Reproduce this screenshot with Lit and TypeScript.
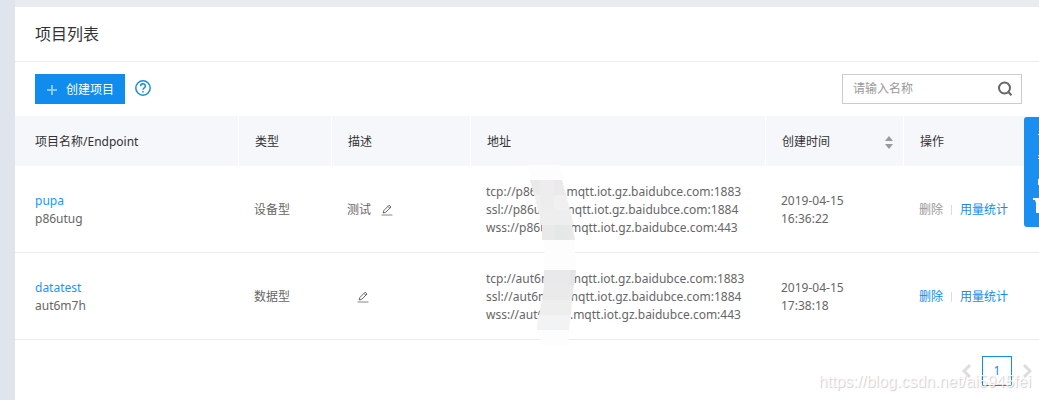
import { LitElement, html, css, svg } from "lit";
import { customElement, state } from "lit/decorators.js";

interface Project {
  name: string;
  endpoint: string;
  type: string;
  note: string;
  urls: string[];
  day: string;
  time: string;
  removable: boolean;
}

const PROJECTS: Project[] = [
  {
    name: "pupa",
    endpoint: "p86utug",
    type: "设备型",
    note: "测试",
    urls: [
      "tcp://p86utug.mqtt.iot.gz.baidubce.com:1883",
      "ssl://p86utug.mqtt.iot.gz.baidubce.com:1884",
      "wss://p86utug.mqtt.iot.gz.baidubce.com:443",
    ],
    day: "2019-04-15",
    time: "16:36:22",
    removable: false,
  },
  {
    name: "datatest",
    endpoint: "aut6m7h",
    type: "数据型",
    note: "",
    urls: [
      "tcp://aut6m7h.mqtt.iot.gz.baidubce.com:1883",
      "ssl://aut6m7h.mqtt.iot.gz.baidubce.com:1884",
      "wss://aut6m7h.mqtt.iot.gz.baidubce.com:443",
    ],
    day: "2019-04-15",
    time: "17:38:18",
    removable: true,
  },
];

// Mosaic strips that hide the endpoint inside the addresses.
const MASKS = [
  svg`<path d="M7 0H39L44 15H11Z" fill="#fdfdfd"/>
    <path d="M10 15H42L46 30H14Z" fill="#eaeaea"/><path d="M20 15H34V30H20Z" fill="#eeecef"/>
    <path d="M14 30H46L50 45H18Z" fill="#f0f0f0"/><path d="M20 30H34V60H20Z" fill="#ededee"/>
    <path d="M18 45H50L54 60H22Z" fill="#eeeeee"/>
    <path d="M22 60H52L55 75H22Z" fill="#e9e9e9"/><path d="M34 60H50V75H34Z" fill="#e6e8e8"/>
    <path d="M23 75H55V90H25Z" fill="#fdfdfd"/>`,
  svg`<path d="M24 3H56V18H24Z" fill="#fdfdfd"/>
    <path d="M24 18H56L54 33H24Z" fill="#e9e8ea"/><path d="M50 18H56L54 33H50Z" fill="#e4e6e6"/>
    <path d="M24 33H54L52 48H22Z" fill="#eaeaea"/>
    <path d="M22 48H52L51 63H19Z" fill="#eeeeee"/>
    <path d="M18 63H51L49 78H17Z" fill="#f2f3f5"/>
    <path d="M18 78H50L48 93H20Z" fill="#fdfdfd"/>`,
];

@customElement("app-root")
export class AppRoot extends LitElement {
  @state() private query = "";

  static styles = css`
    :host {
      display: block;
      min-height: 100vh;
      box-sizing: border-box;
      padding: 7px 0 0 15px;
      overflow: hidden;
      position: relative;
      background: linear-gradient(90deg, #e0e4ed 15px, #e8ebf0 15px);
      font: 12px/18px "Noto Sans", "Noto Sans CJK SC", sans-serif;
      color: #666;
    }
    * { box-sizing: border-box; }
    button, input { font: inherit; color: inherit; margin: 0; }
    button { border: 0; padding: 0; background: none; cursor: pointer; }
    a { color: #108cee; text-decoration: none; }
    svg { display: block; }
    .panel { background: #fff; min-height: calc(100vh - 7px); }
    .title {
      margin: 0;
      padding: 15px 20px;
      border-bottom: 1px solid #ebebeb;
      font-size: 16px;
      line-height: 24px;
      font-weight: 400;
      color: #333;
    }
    .bar { display: flex; align-items: center; padding: 12px 17px 12px 20px; }
    .create {
      display: flex;
      align-items: center;
      gap: 8px;
      height: 30px;
      padding: 2px 11px 0 12px;
      background: #108cee;
      color: #fff;
    }
    .help { margin: 0 auto 2px 9px; }
    .search {
      display: flex;
      align-items: center;
      width: 180px;
      height: 30px;
      padding: 0 8px 0 10px;
      border: 1px solid #ccc;
    }
    .field { flex: 1; min-width: 0; border: 0; padding: 0; outline: 0; background: none; }
    .field::placeholder { color: #999; opacity: 1; }
    .grid { width: 100%; border-collapse: separate; border-spacing: 0; table-layout: fixed; }
    .c-name { width: 223px; }
    .c-type { width: 93px; }
    .c-note { width: 139px; }
    .c-time { width: 138px; }
    .c-ops { width: 136px; }
    .grid th {
      height: 50px;
      padding: 2px 10px 0 16px;
      border-left: 1px solid #fff;
      background: #f6f7fb;
      text-align: left;
      font-weight: 400;
      color: #333;
    }
    .grid td { height: 87px; padding: 2px 0 0 16px; border-bottom: 1px solid #ebebeb; }
    .grid th:first-child, .grid td:first-child { padding-left: 20px; border-left: 0; }
    .name { color: #1696ff; }
    .sortable { display: flex; align-items: center; justify-content: space-between; }
    .note { display: flex; align-items: center; gap: 10px; }
    .addresses { position: relative; white-space: nowrap; }
    .mask { position: absolute; left: 34px; top: -18px; }
    .ops { display: flex; align-items: center; gap: 8px; white-space: nowrap; }
    .ops .split { width: 1px; height: 10px; background: #ddd; }
    .link { color: #108cee; }
    .link:disabled { color: #999; cursor: default; }
    .pager { display: flex; align-items: center; justify-content: flex-end; gap: 10px; padding: 16px 7px 0 0; }
    .page { width: 30px; height: 30px; border: 1px solid #108cee; color: #108cee; }
    .dock {
      position: absolute;
      right: 0;
      top: 117px;
      width: 15px;
      height: 110px;
      border-radius: 3px 0 0 3px;
      background: #1b8ff0;
    }
    .watermark {
      position: absolute;
      right: 8px;
      bottom: 8px;
      font: 16px/20px "Liberation Sans", sans-serif;
      color: rgba(255, 255, 255, 0.8);
      text-shadow: 1px 1px 1px rgba(0, 0, 0, 0.2);
      pointer-events: none;
    }
  `;

  private row(p: Project, i: number) {
    return html`<tr>
      <td><a class="name" href="#${p.name}">${p.name}</a><div>${p.endpoint}</div></td>
      <td>${p.type}</td>
      <td>
        <div class="note">
          <span>${p.note}</span>
          <button aria-label="编辑描述">
            <svg width="12" height="12" viewBox="0 0 12 12" fill="none" stroke="#666">
              <path d="M2.2 9L2.8 6.6L8.1 1.2L10 3L4.7 8.3Z M7 2.4L8.8 4.2" />
              <path d="M0.5 11H11.5" stroke="#888" />
            </svg>
          </button>
        </div>
      </td>
      <td>
        <div class="addresses">
          ${p.urls.map((u) => html`<div>${u}</div>`)}
          <svg class="mask" width="60" height="93" aria-hidden="true">${MASKS[i]}</svg>
        </div>
      </td>
      <td>${p.day}<br />${p.time}</td>
      <td>
        <div class="ops">
          <button class="link" ?disabled=${!p.removable}>删除</button>
          <span class="split"></span>
          <a href="#usage">用量统计</a>
        </div>
      </td>
    </tr>`;
  }

  render() {
    const shown = PROJECTS.filter((p) => p.name.includes(this.query));
    return html`
      <main class="panel">
        <h1 class="title">项目列表</h1>
        <div class="bar">
          <button class="create">
            <svg width="11" height="11" stroke="#8ac8f7" stroke-width="2"><path d="M5 0V10M0 5H10" /></svg>
            <span>创建项目</span>
          </button>
          <button class="help" aria-label="帮助">
            <svg width="18" height="18" viewBox="0 0 18 18" fill="none" stroke="#1a8fd1" stroke-width="1.5">
              <circle cx="9" cy="9" r="7.2" />
              <path d="M6.6 7.2C6.6 4.1 11.4 4.1 11.4 7.1C11.4 8.8 9 8.8 9 10.8M9 12V13.5" />
            </svg>
          </button>
          <label class="search">
            <input class="field" type="text" placeholder="请输入名称" aria-label="请输入名称"
              .value=${this.query}
              @input=${(e: Event) => (this.query = (e.target as HTMLInputElement).value)} />
            <svg width="16" height="16" viewBox="0 0 16 16" fill="none" stroke="#666" stroke-width="2">
              <circle cx="7.5" cy="7" r="5.5" /><path d="M11.3 11L14.5 14.2" />
            </svg>
          </label>
        </div>
        <table class="grid">
          <colgroup>
            <col class="c-name" /><col class="c-type" /><col class="c-note" /><col />
            <col class="c-time" /><col class="c-ops" />
          </colgroup>
          <thead>
            <tr>
              <th>项目名称/Endpoint</th>
              <th>类型</th>
              <th>描述</th>
              <th>地址</th>
              <th>
                <div class="sortable">
                  <span>创建时间</span>
                  <button aria-label="排序">
                    <svg width="8" height="13" fill="#999"><path d="M4 0L8 5H0ZM0 8H8L4 13Z" /></svg>
                  </button>
                </div>
              </th>
              <th>操作</th>
            </tr>
          </thead>
          <tbody>${shown.map((p) => this.row(p, PROJECTS.indexOf(p)))}</tbody>
        </table>
        <nav class="pager" aria-label="分页">
          <button aria-label="上一页">
            <svg width="10" height="14" fill="none" stroke="#ddd" stroke-width="3"><path d="M8 1L2 7L8 13" /></svg>
          </button>
          <button class="page">1</button>
          <button aria-label="下一页">
            <svg width="10" height="14" fill="none" stroke="#ddd" stroke-width="3"><path d="M2 1L8 7L2 13" /></svg>
          </button>
        </nav>
      </main>
      <aside class="dock">
        <svg width="15" height="110" fill="#fff">
          <path d="M14 17H15V18H14ZM14 38H15V39H14ZM14 41H15V42H14ZM14 62H15V68H14Z" />
          <path d="M9 81H15V96H12V86L11 83H9Z" />
        </svg>
      </aside>
      <div class="watermark">https://blog.csdn.net/ai5945fei</div>
    `;
  }
}
